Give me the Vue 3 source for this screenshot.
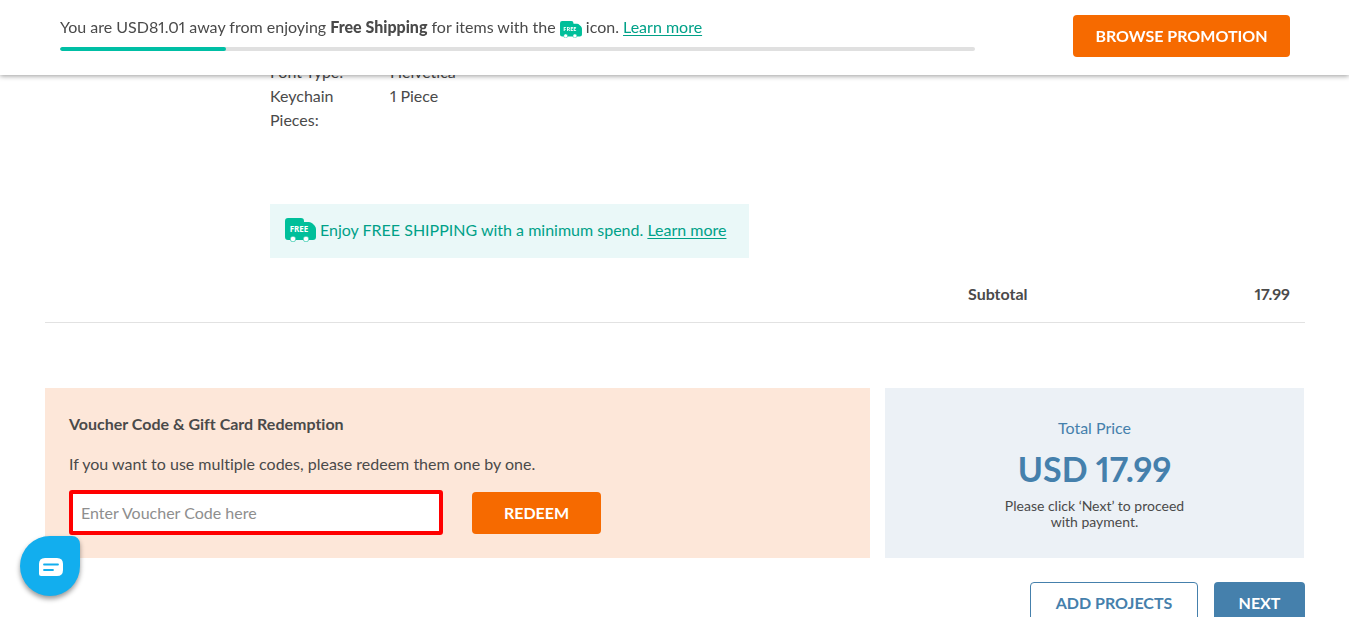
<script setup>
import { ref } from 'vue'

const voucher = ref('')
const progress = 18.1
const specs = [
  { label: 'Font Type:', value: 'Helvetica' },
  { label: 'Keychain Pieces:', value: '1 Piece' },
]
</script>

<template>
  <div class="page">
    <header class="promo-bar">
      <div class="promo-info">
        <p class="promo-text">
          You are USD81.01 away from enjoying <strong>Free Shipping</strong> for items with the
          <svg class="truck small" viewBox="0 0 31 24" aria-hidden="true">
            <path fill="#00bf9a" d="M3 0h13q3 0 3 3v1h5q2 0 3.500 1.500l2 2Q31 9 31 11v8q0 3-3 3H3q-3 0-3-3V3q0-3 3-3z" />
            <circle cx="8" cy="21" r="2.800" fill="#fff" stroke="#00bf9a" stroke-width="0.600" />
            <circle cx="21" cy="21" r="2.800" fill="#fff" stroke="#00bf9a" stroke-width="0.600" />
            <text x="14" y="14" text-anchor="middle" class="truck-label">FREE</text>
          </svg>
          icon. <a href="#">Learn more</a>
        </p>
        <div class="track"><div class="fill" :style="{ width: progress + '%' }"></div></div>
      </div>
      <button type="button" class="btn orange browse">BROWSE PROMOTION</button>
    </header>

    <main class="content">
      <section class="item">
        <dl class="specs">
          <template v-for="spec in specs" :key="spec.label">
            <dt>{{ spec.label }}</dt>
            <dd>{{ spec.value }}</dd>
          </template>
        </dl>
        <p class="notice">
          <svg class="truck" viewBox="0 0 31 24" aria-hidden="true">
            <path fill="#00bf9a" d="M3 0h13q3 0 3 3v1h5q2 0 3.500 1.500l2 2Q31 9 31 11v8q0 3-3 3H3q-3 0-3-3V3q0-3 3-3z" />
            <circle cx="8" cy="21" r="2.800" fill="#fff" stroke="#00bf9a" stroke-width="0.600" />
            <circle cx="21" cy="21" r="2.800" fill="#fff" stroke="#00bf9a" stroke-width="0.600" />
            <text x="14" y="14" text-anchor="middle" class="truck-label">FREE</text>
          </svg>
          <span>Enjoy FREE SHIPPING with a minimum spend. <a href="#">Learn more</a></span>
        </p>
      </section>

      <div class="subtotal">
        <span>Subtotal</span>
        <span>17.99</span>
      </div>

      <div class="panels">
        <form class="voucher" @submit.prevent>
          <h2>Voucher Code &amp; Gift Card Redemption</h2>
          <label for="voucher">If you want to use multiple codes, please redeem them one by one.</label>
          <div class="redeem-row">
            <input id="voucher" v-model="voucher" type="text" placeholder="Enter Voucher Code here" />
            <button type="submit" class="btn orange redeem">REDEEM</button>
          </div>
        </form>
        <aside class="total">
          <p class="total-label">Total Price</p>
          <p class="total-price">USD 17.99</p>
          <p class="total-note">Please click ‘Next’ to proceed with payment.</p>
        </aside>
      </div>

      <div class="actions">
        <button type="button" class="btn outline">ADD PROJECTS</button>
        <button type="button" class="btn blue">NEXT</button>
      </div>
    </main>

    <button type="button" class="chat" aria-label="Chat">
      <svg viewBox="0 0 24 18" aria-hidden="true">
        <path fill="#fff" d="M6 0h12q6 0 6 6v6q0 6-6 6H2q-2 0-2-2V6q0-6 6-6z" />
        <path stroke="#12aeee" stroke-width="1.800" stroke-linecap="round" d="M5 6.500h14M5 12h9" />
      </svg>
    </button>
  </div>
</template>

<style>
body {
  margin: 0;
  background: #fff;
}
</style>

<style scoped>
.page {
  height: 100vh;
  overflow: hidden;
  font-family: Lato, "Liberation Sans", sans-serif;
  font-size: 16px;
  font-variant-ligatures: none;
  font-variant-numeric: proportional-nums;
  line-height: 24px;
  color: #4a4a4a;
}
p, dl, dd, h2 {
  margin: 0;
}
a {
  color: #00a188;
  text-decoration: underline;
  text-underline-offset: 2px;
}
.promo-bar {
  position: fixed;
  inset: 0 0 auto;
  z-index: 2;
  box-sizing: border-box;
  height: 75px;
  padding: 15px 59px 0 60px;
  display: flex;
  justify-content: space-between;
  align-items: flex-start;
  gap: 98px;
  background: #fff;
  box-shadow: 0 1px 5px rgba(0, 0, 0, 0.4);
}
.promo-info {
  flex: 1;
}
.promo-text {
  white-space: nowrap;
}
.promo-text strong {
  font-weight: 900;
}
.track {
  height: 4px;
  margin-top: 8px;
  border-radius: 2px;
  background: #e0e0e0;
  overflow: hidden;
}
.fill {
  height: 4px;
  border-radius: 2px;
  background: #00bfa5;
}
.truck {
  width: 31px;
  height: 24px;
  flex: none;
}
.truck.small {
  width: 22px;
  height: 17px;
  vertical-align: -5px;
}
.truck-label {
  font: bold 8px "Open Sans", sans-serif;
  fill: #fff;
}
.btn {
  box-sizing: border-box;
  height: 42px;
  padding: 0 20px;
  border: 1px solid transparent;
  border-radius: 4px;
  font-family: inherit;
  font-size: 16px;
  font-weight: bold;
  line-height: 24px;
  white-space: nowrap;
  color: #fff;
}
.orange {
  background: #f66a00;
}
.browse {
  width: 217px;
}
.content {
  padding: 60px 44px 0 45px;
}
.item {
  margin-left: 225px;
}
.specs {
  display: grid;
  grid-template-columns: 88px 1fr;
  column-gap: 32px;
}
.notice {
  box-sizing: border-box;
  width: 479px;
  height: 54px;
  margin-top: 72px;
  padding: 0 15px 2px;
  display: flex;
  align-items: center;
  gap: 4px;
  background: #eaf8f8;
  color: #00a188;
  white-space: nowrap;
}
.subtotal {
  display: flex;
  justify-content: space-between;
  margin-top: 24px;
  padding: 0 15px 16px 923px;
  border-bottom: 1px solid #e2e2e2;
  font-weight: bold;
}
.panels {
  display: grid;
  grid-template-columns: 825fr 419fr;
  gap: 15px;
  margin-top: 65px;
  padding-right: 1px;
}
.voucher {
  padding: 24px 24px 23px;
  background: #fde7d9;
}
h2 {
  margin-bottom: 16px;
  font-size: 16px;
  line-height: 24px;
}
.voucher label {
  display: block;
}
.redeem-row {
  display: flex;
  align-items: center;
  gap: 29px;
  margin-top: 14px;
}
input {
  box-sizing: border-box;
  width: 374px;
  height: 45px;
  padding: 0 8px;
  border: 4px solid #f00;
  border-radius: 3px;
  background: #fff;
  font: 16px/24px Lato, "Liberation Sans", sans-serif;
  color: #4a4a4a;
}
input::placeholder {
  color: #8e8e8e;
  opacity: 1;
}
.redeem {
  width: 129px;
}
.total {
  display: flex;
  flex-direction: column;
  align-items: center;
  padding-top: 28px;
  background: #ecf1f6;
  text-align: center;
}
.total-label {
  color: #4580ac;
}
.total-price {
  margin-top: 9px;
  font-size: 34px;
  font-weight: bold;
  line-height: 40px;
  color: #4580ac;
}
.total-note {
  width: 196px;
  margin-top: 9px;
  font-size: 14px;
  line-height: 16px;
}
.actions {
  display: flex;
  justify-content: flex-end;
  gap: 16px;
  margin-top: 24px;
}
.outline {
  width: 168px;
  border-color: #4580ac;
  background: #fff;
  color: #4580ac;
}
.blue {
  width: 91px;
  background: #4580ac;
}
.chat {
  position: fixed;
  left: 20px;
  bottom: 21px;
  z-index: 3;
  display: flex;
  align-items: center;
  justify-content: center;
  width: 60px;
  height: 60px;
  padding: 2px 0 0 2px;
  border: 0;
  border-radius: 50% 8px 50% 50%;
  background: #12aeee;
  box-shadow: 0 3px 5px rgba(0, 0, 0, 0.4);
}
.chat svg {
  width: 24px;
  height: 18px;
}
</style>
